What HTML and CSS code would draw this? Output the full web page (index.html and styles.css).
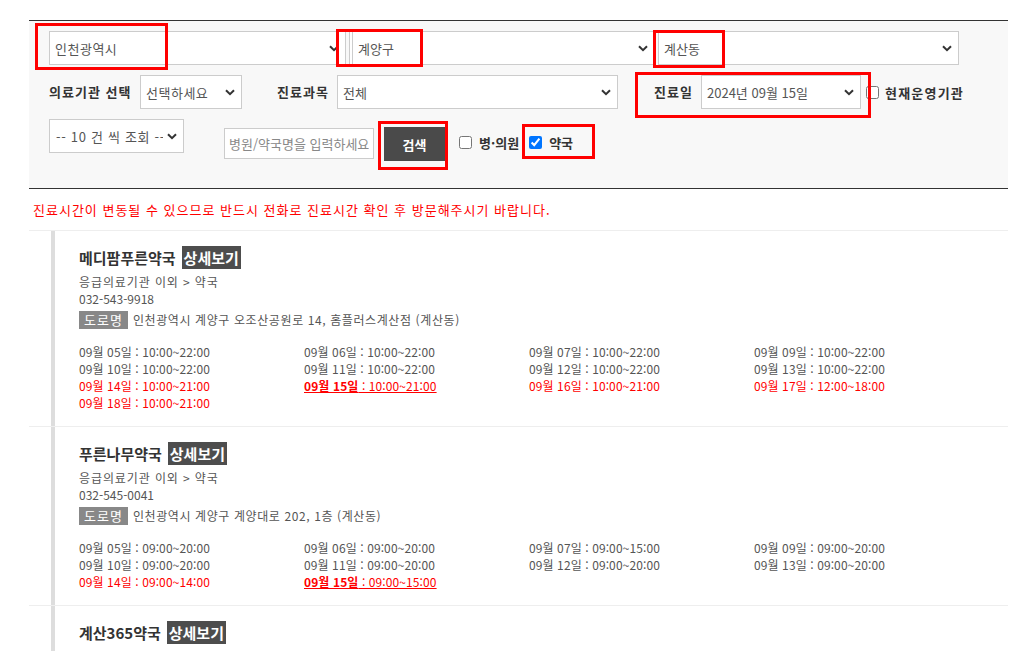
FILE: index.html
```html
<!DOCTYPE html>
<html lang="ko">
<head>
<meta charset="UTF-8">
<meta name="viewport" content="width=device-width, initial-scale=1.0">
<title>진료기관 검색</title>
<link rel="stylesheet" href="styles.css">
</head>
<body>

<div class="wrap">
    <form class="search-box" onsubmit="return false">
        <div class="row">
            <span class="sel sel-sido">
                <select><option>인천광역시</option></select>
                <svg width="10" height="7" viewBox="0 0 10 7"><path d="M1 1.2 5 5.2 9 1.2" fill="none" stroke="#333" stroke-width="2"/></svg>
            </span>
            <span class="sel sel-gu">
                <select><option>계양구</option></select>
                <svg width="10" height="7" viewBox="0 0 10 7"><path d="M1 1.2 5 5.2 9 1.2" fill="none" stroke="#333" stroke-width="2"/></svg>
            </span>
            <span class="sel sel-dong">
                <select><option>계산동</option></select>
                <svg width="10" height="7" viewBox="0 0 10 7"><path d="M1 1.2 5 5.2 9 1.2" fill="none" stroke="#333" stroke-width="2"/></svg>
            </span>
        </div>

        <div class="row">
            <label class="lbl lbl-type">의료기관 선택</label>
            <span class="sel sel-type">
                <select><option>선택하세요</option></select>
                <svg width="10" height="7" viewBox="0 0 10 7"><path d="M1 1.2 5 5.2 9 1.2" fill="none" stroke="#333" stroke-width="2"/></svg>
            </span>
            <label class="lbl lbl-dept">진료과목</label>
            <span class="sel sel-dept">
                <select><option>전체</option></select>
                <svg width="10" height="7" viewBox="0 0 10 7"><path d="M1 1.2 5 5.2 9 1.2" fill="none" stroke="#333" stroke-width="2"/></svg>
            </span>
            <label class="lbl lbl-date">진료일</label>
            <span class="sel sel-date">
                <select><option>2024년 09월 15일</option></select>
                <svg width="10" height="7" viewBox="0 0 10 7"><path d="M1 1.2 5 5.2 9 1.2" fill="none" stroke="#333" stroke-width="2"/></svg>
            </span>
            <input type="checkbox" id="openNow" class="chk chk-open">
            <label for="openNow" class="chk-lbl lbl-open">현재운영기관</label>
        </div>

        <div class="row row-last">
            <span class="sel sel-count">
                <select><option>-- 10 건 씩 조회 --</option></select>
                <svg width="10" height="7" viewBox="0 0 10 7"><path d="M1 1.2 5 5.2 9 1.2" fill="none" stroke="#333" stroke-width="2"/></svg>
            </span>
            <input type="text" class="keyword" placeholder="병원/약국명을 입력하세요">
            <button type="submit" class="btn-search">검색</button>
            <input type="checkbox" id="hospital" class="chk chk-hosp">
            <label for="hospital" class="chk-lbl">병·의원</label>
            <input type="checkbox" id="pharmacy" class="chk chk-pharm" checked>
            <label for="pharmacy" class="chk-lbl">약국</label>
        </div>
    </form>

    <p class="notice">진료시간이 변동될 수 있으므로 반드시 전화로 진료시간 확인 후 방문해주시기 바랍니다.</p>

    <ul class="result">
        <li class="item">
            <div class="item-in">
                <div class="name">메디팜푸른약국<a href="#" class="more">상세보기</a></div>
                <div class="cate">응급의료기관 이외 &gt; 약국</div>
                <div class="tel">032-543-9918</div>
                <div class="addr"><span class="road">도로명</span>인천광역시 계양구 오조산공원로 14, 홈플러스계산점 (계산동)</div>
                <ul class="times">
                    <li>09월 05일 : 10:00~22:00</li>
                    <li>09월 06일 : 10:00~22:00</li>
                    <li>09월 07일 : 10:00~22:00</li>
                    <li>09월 09일 : 10:00~22:00</li>
                    <li>09월 10일 : 10:00~22:00</li>
                    <li>09월 11일 : 10:00~22:00</li>
                    <li>09월 12일 : 10:00~22:00</li>
                    <li>09월 13일 : 10:00~22:00</li>
                    <li class="holi">09월 14일 : 10:00~21:00</li>
                    <li class="holi today"><strong>09월 15일</strong> : 10:00~21:00</li>
                    <li class="holi">09월 16일 : 10:00~21:00</li>
                    <li class="holi">09월 17일 : 12:00~18:00</li>
                    <li class="holi">09월 18일 : 10:00~21:00</li>
                </ul>
            </div>
        </li>
        <li class="item">
            <div class="item-in">
                <div class="name">푸른나무약국<a href="#" class="more">상세보기</a></div>
                <div class="cate">응급의료기관 이외 &gt; 약국</div>
                <div class="tel">032-545-0041</div>
                <div class="addr"><span class="road">도로명</span>인천광역시 계양구 계양대로 202, 1층 (계산동)</div>
                <ul class="times">
                    <li>09월 05일 : 09:00~20:00</li>
                    <li>09월 06일 : 09:00~20:00</li>
                    <li>09월 07일 : 09:00~15:00</li>
                    <li>09월 09일 : 09:00~20:00</li>
                    <li>09월 10일 : 09:00~20:00</li>
                    <li>09월 11일 : 09:00~20:00</li>
                    <li>09월 12일 : 09:00~20:00</li>
                    <li>09월 13일 : 09:00~20:00</li>
                    <li class="holi">09월 14일 : 09:00~14:00</li>
                    <li class="holi today"><strong>09월 15일</strong> : 09:00~15:00</li>
                </ul>
            </div>
        </li>
        <li class="item">
            <div class="item-in">
                <div class="name">계산365약국<a href="#" class="more">상세보기</a></div>
            </div>
        </li>
    </ul>
</div>

<!-- 캡처용 표시 -->
<div class="mark mark-sido"></div>
<div class="mark mark-gu"></div>
<div class="mark mark-dong"></div>
<div class="mark mark-date"></div>
<div class="mark mark-btn"></div>
<div class="mark mark-pharm"></div>

</body>
</html>
```

FILE: styles.css
```css
html, body {
    margin: 0;
    padding: 0;
}
body {
    font-family: "Noto Sans CJK KR", "Noto Sans", sans-serif;
    font-size: 12px;
    color: #555;
    background: #fff;
    position: relative;
}
.wrap {
    width: 979px;
    margin: 20px 0 0 29px;
}
.search-box {
    background: #f8f8f8;
    border-top: 1px solid #333;
    border-bottom: 1px solid #333;
    padding: 10px 20px 27px 20px;
}
.row {
    display: flex;
    align-items: center;
    margin-bottom: 10px;
}
.row-last {
    align-items: flex-start;
    margin-bottom: 0;
}
.sel {
    position: relative;
    display: inline-block;
    height: 34px;
}
.sel select {
    -webkit-appearance: none;
    appearance: none;
    width: 100%;
    height: 34px;
    border: 1px solid #ccc;
    background: #fff;
    padding: 0 20px 0 5px;
    font-family: inherit;
    font-size: 13px;
    color: #555;
    outline: none;
    border-radius: 0;
}
.sel svg {
    position: absolute;
    right: 7px;
    top: 14px;
    pointer-events: none;
}
.sel-sido { width: 297px; }
.sel-gu { width: 306px; margin-left: 3px; }
.sel-dong { width: 301px; margin-left: 3px; }
.sel-gu select { border-left: 4px double #ccc; }
.sel-sido select,
.sel-type select { letter-spacing: 0.5px; }
.sel-type { width: 102px; }
.sel-dept { width: 281px; }
.sel-date { width: 160px; }
.sel-count { width: 135px; }
.sel-count select { padding-left: 6px; letter-spacing: 0.7px; }
.lbl {
    font-size: 13px;
    font-weight: bold;
    color: #333;
    line-height: 34px;
    letter-spacing: 1px;
}
.lbl-type { width: 91px; }
.lbl-dept { width: 60px; margin-left: 35px; }
.lbl-date { width: 47px; margin-left: 36px; }
.chk {
    width: 13px;
    height: 13px;
    margin: 0 6px 0 5px;
}
.chk-lbl {
    font-size: 13px;
    font-weight: bold;
    color: #333;
    line-height: 17px;
}
.lbl-open { letter-spacing: 1.2px; }
.keyword {
    width: 150px;
    height: 31px;
    box-sizing: border-box;
    margin: 9px 0 0 40px;
    border: 1px solid #ccc;
    background: #fff;
    padding: 0 4px;
    font-family: inherit;
    font-size: 13px;
    outline: none;
}
.keyword::placeholder {
    color: #888;
}
.btn-search {
    width: 61px;
    height: 34px;
    margin: 8px 0 0 10px;
    border: none;
    background: #4a4a4a;
    color: #fff;
    font-family: inherit;
    font-size: 13px;
    font-weight: bold;
    cursor: pointer;
}
.row-last .chk {
    margin-top: 17px;
}
.row-last .chk-lbl {
    margin-top: 15px;
}
.chk-hosp { margin-left: 14px; margin-right: 7px; }
.chk-pharm { margin-left: 10px; margin-right: 7px; }
.notice {
    margin: 0;
    padding: 12px 0 12px 4px;
    font-size: 13px;
    line-height: 17px;
    letter-spacing: 1px;
    color: #f00;
}
.result {
    list-style: none;
    margin: 0;
    padding: 0;
}
.item {
    border-top: 1px solid #eee;
    padding-left: 22px;
}
.item-in {
    border-left: 4px solid #ddd;
    padding: 15px 0 15px 24px;
}
.name {
    font-size: 15px;
    font-weight: bold;
    color: #333;
    line-height: 23px;
}
.more {
    display: inline-block;
    margin-left: 6px;
    padding: 0 2px;
    background: #4d4d4d;
    color: #fff;
    text-decoration: none;
    line-height: 23px;
}
.cate {
    margin-top: 4px;
    line-height: 17px;
    letter-spacing: 0.9px;
}
.tel {
    line-height: 17px;
}
.addr {
    margin-top: 4px;
    line-height: 18px;
    letter-spacing: 0.6px;
}
.road {
    display: inline-block;
    margin-right: 5px;
    padding: 0 5px;
    background: #888;
    color: #fff;
    font-size: 13px;
    line-height: 18px;
    letter-spacing: 1px;
}
.times {
    list-style: none;
    margin: 14px 0 0 0;
    padding: 0;
    display: grid;
    grid-template-columns: repeat(4, 225px);
}
.times li {
    line-height: 17px;
    letter-spacing: 0.1px;
    white-space: nowrap;
}
.times .holi {
    color: #f00;
}
.times .today {
    text-decoration: underline;
}
.mark {
    position: absolute;
    border: 3px solid #f00;
    box-sizing: border-box;
}
.mark-sido { left: 35px; top: 23px; width: 133px; height: 47px; }
.mark-gu { left: 336px; top: 29px; width: 87px; height: 38px; }
.mark-dong { left: 653px; top: 30px; width: 72px; height: 38px; }
.mark-date { left: 635px; top: 72px; width: 236px; height: 46px; }
.mark-btn { left: 378px; top: 121px; width: 70px; height: 49px; }
.mark-pharm { left: 522px; top: 124px; width: 73px; height: 35px; }
```
